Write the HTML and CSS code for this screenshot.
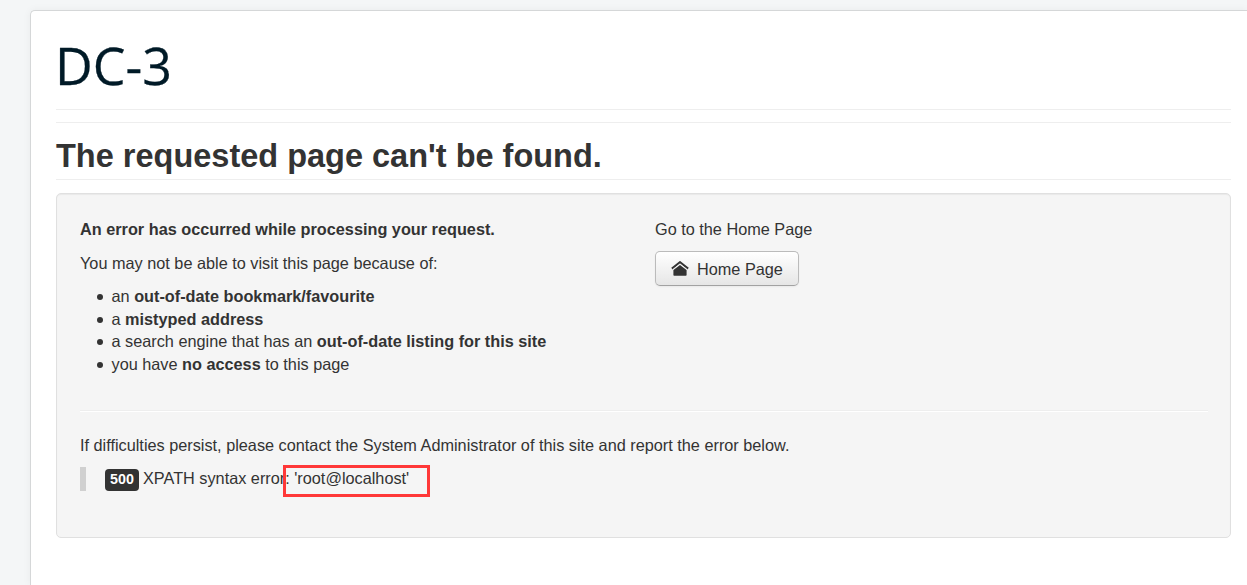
FILE: index.html
```html
<!DOCTYPE html>
<html lang="en">
<head>
<meta charset="utf-8">
<title>DC-3 - Error 500</title>
<link rel="stylesheet" href="styles.css">
</head>
<body>
<div class="container">
  <header class="header"><span class="site-title">DC-3</span></header>
  <div class="banner"></div>
  <h1 class="page-header">The requested page can't be found.</h1>
  <main class="well">
    <div class="row">
      <section class="col">
        <p><strong>An error has occurred while processing your request.</strong></p>
        <p>You may not be able to visit this page because of:</p>
        <ul class="reasons">
          <li>an <strong>out-of-date bookmark/favourite</strong></li>
          <li>a <strong>mistyped address</strong></li>
          <li>a search engine that has an <strong>out-of-date listing for this site</strong></li>
          <li>you have <strong>no access</strong> to this page</li>
        </ul>
      </section>
      <section class="col">
        <p>Go to the Home Page</p>
        <a class="btn"><svg class="icon-home" viewBox="0 0 18 16" width="18" height="16"><path d="M9 3.900 2.400 9v5q0 .8.800.8h11.600q.8 0 .8-.8V9z"/><path d="M.9 7.600 9 1.200 17.100 7.600" fill="none" stroke="#333" stroke-width="2.100"/><path d="M1.600 8.700 9 2.900 16.400 8.700" fill="none" stroke="#f4f4f4" stroke-width=".8"/></svg><span class="btn-text">Home Page</span></a>
      </section>
    </div>
    <hr class="rule">
    <p class="contact">If difficulties persist, please contact the System Administrator of this site and report the error below.</p>
    <blockquote class="error"><span class="label">500</span><span class="message">XPATH syntax error: <span class="found">'root@localhost'<i class="marker"></i></span></span></blockquote>
  </main>
</div>
</body>
</html>
```

FILE: styles.css
```css
* { box-sizing: border-box; }
body {
  margin: 0;
  height: 585px;
  padding: 10px 0 0 30px;
  background: #f4f6f7;
  color: #333;
  font: 16.270px/23px "Liberation Sans", Arial, sans-serif;
}
.container {
  height: 575px;
  padding: 25px 15px 0 25px;
  background: #fff;
  border: 1px solid #d5d7d8;
  border-width: 1px 0 0 1px;
  border-radius: 5px 0 0 0;
  box-shadow: 0 0 8px rgba(0, 0, 0, .05);
  clip-path: inset(-10px 0 0 -30px);
}
.header {
  height: 74px;
  border-bottom: 1px solid #eee;
}
.site-title {
  display: block;
  margin-left: -1px;
  font: 52px/58px "Open Sans", sans-serif;
  color: #001a27;
  -webkit-text-stroke: .3px #001a27;
}
.banner { height: 12px; }
.page-header {
  width: 1175px;
  height: 58px;
  margin: 0 0 13px;
  padding-top: 13px;
  border-top: 1px solid #eee;
  border-bottom: 1px solid #eee;
  font-size: 32.500px;
  line-height: 41px;
}
.header, .banner, .well { width: 1175px; }
.well {
  height: 345px;
  padding: 24px 23px 0;
  background: #f5f5f5;
  border: 1px solid #e0e0e0;
  border-radius: 5px;
  box-shadow: inset 0 1px 1px rgba(0, 0, 0, .05);
}
p { margin: 0 0 11px; }
.row {
  display: grid;
  grid-template-columns: 575px 1fr;
  height: 192px;
}
.reasons {
  margin: -1px 0 0;
  padding: 0 0 0 31.500px;
  line-height: 22.600px;
  list-style: none;
}
.reasons li::before {
  content: "";
  display: inline-block;
  width: 6px;
  height: 6px;
  margin: 0 9px 2px -15px;
  border-radius: 50%;
  background: #333;
}
.btn {
  display: inline-flex;
  align-items: center;
  gap: 8px;
  height: 35px;
  width: 144px;
  margin-top: -1px;
  padding-left: 15px;
  border: 1px solid #bbb;
  border-bottom-color: #a2a2a2;
  border-radius: 5px;
  background: linear-gradient(#fff, #e6e6e6);
  box-shadow: inset 0 1px 0 rgba(255, 255, 255, .2), 0 1px 2px rgba(0, 0, 0, .05);
}
.btn-text { padding-top: 2px; }
.icon-home { fill: #333; }
.rule {
  width: 1128px;
  margin: 0 0 22px;
  border: 0;
  border-top: 1px solid #eee;
  border-bottom: 1px solid #fff;
}
.contact { margin-bottom: 10px; }
.error {
  display: flex;
  align-items: center;
  height: 24px;
  margin: 0;
  padding-left: 19px;
  border-left: 6px solid #d0d0d0;
}
.label {
  width: 34px;
  height: 22px;
  margin: 1px 4px 0 0;
  border-radius: 4px;
  background: #333;
  color: #fff;
  font-size: 14.300px;
  font-weight: bold;
  line-height: 21px;
  text-align: center;
}
.message { margin-top: -2px; }
.found { position: relative; }
.marker {
  position: absolute;
  left: -11px;
  top: -4px;
  width: 147px;
  height: 32px;
  border: 3px solid #ff3838;
}
```
